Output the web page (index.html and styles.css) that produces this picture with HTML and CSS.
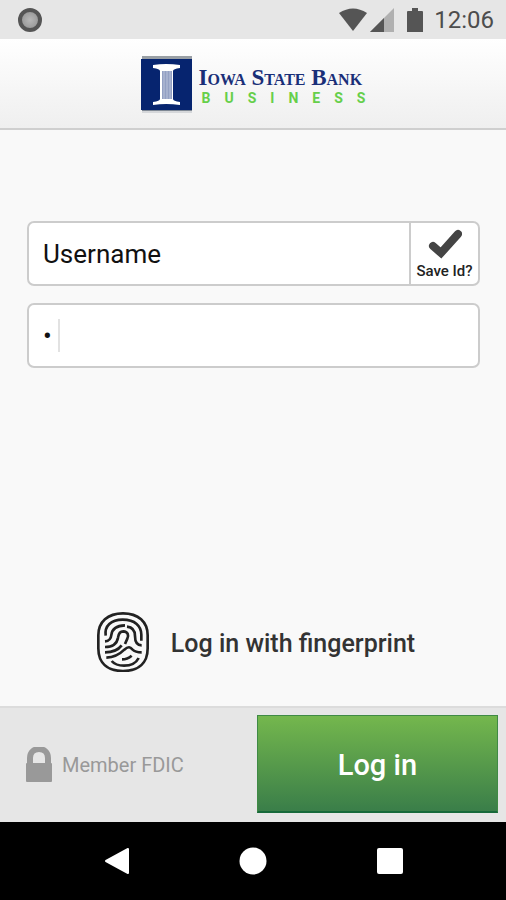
FILE: index.html
```html
<!DOCTYPE html>
<html lang="en">
<head>
  <meta charset="utf-8">
  <meta name="viewport" content="width=device-width, initial-scale=1">
  <title>Iowa State Bank Business</title>
  <link rel="stylesheet" href="styles.css">
</head>
<body>
  <div class="status-bar">
    <span class="status-dot"></span>
    <div class="status-icons">
      <svg class="wifi" width="30" height="24" viewBox="0 0 30 24">
        <path d="M1 5 Q15 -4 29 5 L15 23 Z" fill="#555"/>
      </svg>
      <svg class="signal" width="24" height="24" viewBox="0 0 24 24">
        <path d="M24 0 V24 H0 Z" fill="#b0b0b0"/>
        <path d="M14 10 V24 H0 Z" fill="#555"/>
      </svg>
      <svg class="battery" width="16" height="24" viewBox="0 0 16 24">
        <path d="M5 0 H11 V3 H15 Q16 3 16 4 V24 H0 V4 Q0 3 1 3 H5 Z" fill="#555"/>
      </svg>
      <span class="clock">12:06</span>
    </div>
  </div>

  <header class="header">
    <svg class="logo-mark" width="52" height="58" viewBox="0 0 52 58">
      <rect x="1" y="0" width="50" height="57" fill="#d5d7da"/>
      <rect x="1" y="0" width="50" height="4" fill="#999fa5"/>
      <rect x="1" y="53" width="50" height="2" fill="#7f8894"/>
      <rect x="0" y="3" width="51" height="51" fill="#06246f"/>
      <path d="M12 9 Q25 7 39 9 V12 Q32 13 32 15 V43 Q32 45 39 46 V49 Q25 47 12 49 V46 Q19 45 19 43 V15 Q19 13 12 12 Z" fill="#fff"/>
      <path d="M21 15 H31 V43 H21 Z" fill="#93a0c3"/>
      <path d="M23 15 V43 M26 15 V43 M29 15 V43" stroke="#b9c2da" stroke-width="1"/>
    </svg>
    <div class="logo-text">
      <span class="logo-name">Iowa State Bank</span>
      <span class="logo-sub">BUSINESS</span>
    </div>
  </header>

  <main class="content">
    <form class="login-form" id="loginForm">
      <div class="field">
        <input type="text" class="field-input" id="username" placeholder="Username" aria-label="Username">
        <label class="save-id" for="saveId">
          <input type="checkbox" id="saveId" checked>
          <svg width="34" height="32" viewBox="0 0 34 32">
            <path d="M5 17 L13 24 L30 5" fill="none" stroke="#444" stroke-width="8" stroke-linecap="round"/>
          </svg>
          <span>Save Id?</span>
        </label>
      </div>
      <div class="field">
        <input type="password" class="field-input password" id="password" value="1" aria-label="Password">
      </div>
    </form>

    <button type="button" class="fingerprint">
      <svg width="52" height="60" viewBox="34 36 156 180" fill="none" stroke="#222" stroke-width="8">
        <path d="M112 40 C66 40 38 66 38 106 V145 C38 190 66 213 112 213 C158 213 186 190 186 145 V106 C186 66 158 40 112 40 Z"/>
        <path d="M60 107 C56 78 76 59 111 59 C148 59 167 78 167 104 V122"/>
        <path d="M58 124 C72 123 76 116 77 105 C79 86 91 77 118 76"/>
        <path d="M124 80 C142 82 148 94 148 108 C148 126 153 136 168 136"/>
        <path d="M58 141 C84 141 94 130 97 113 C99 98 106 94 113 94 C127 95 130 106 125 116 L118 132"/>
        <path d="M58 157 C84 157 99 148 108 136"/>
        <path d="M62 173 C90 172 105 160 116 149 C128 138 134 141 140 148 C146 154 156 157 168 157"/>
        <path d="M78 183 C88 195 100 197 115 197 C138 197 151 190 159 174"/>
        <path d="M109 178 C122 178 131 173 138 167"/>
      </svg>
      <span>Log in with fingerprint</span>
    </button>
  </main>

  <footer class="footer">
    <div class="fdic">
      <svg width="28" height="36" viewBox="0 0 28 36">
        <path d="M5 18 V11 C5 -1 23 -1 23 11 V18" fill="none" stroke="#999" stroke-width="6"/>
        <rect x="1" y="16" width="26" height="19" rx="1" fill="#999"/>
      </svg>
      <span>Member FDIC</span>
    </div>
    <button type="submit" form="loginForm" class="login-button">Log in</button>
  </footer>

  <nav class="nav-bar">
    <button type="button" aria-label="Back">
      <svg width="28" height="28" viewBox="0 0 28 28"><path d="M4 14 L26 2 V26 Z" fill="#fff" stroke="#fff" stroke-width="2" stroke-linejoin="round"/></svg>
    </button>
    <button type="button" aria-label="Home">
      <svg width="28" height="28" viewBox="0 0 28 28"><circle cx="14" cy="14" r="13.5" fill="#fff"/></svg>
    </button>
    <button type="button" aria-label="Recent apps">
      <svg width="28" height="28" viewBox="0 0 28 28"><rect x="1" y="1" width="26" height="26" rx="2" fill="#fff"/></svg>
    </button>
  </nav>
</body>
</html>
```
FILE: styles.css
```css
* {
  box-sizing: border-box;
}

body {
  margin: 0;
  min-height: 100vh;
  display: flex;
  flex-direction: column;
  background-color: #f9f9f9;
  font-family: Roboto, sans-serif;
  color: #222;
}

button {
  border: none;
  padding: 0;
  background: none;
  font-family: inherit;
  cursor: pointer;
}

svg {
  display: block;
  flex: none;
}

/* phone status bar */
.status-bar {
  display: flex;
  align-items: center;
  justify-content: space-between;
  height: 39px;
  padding: 1px 12px 0 18px;
  background-color: #e6e6e6;
}

.status-dot {
  width: 24px;
  height: 24px;
  border: 4px solid #555;
  border-radius: 50%;
  background: radial-gradient(#b8b8b8, #909090);
}

.status-icons {
  display: flex;
  align-items: center;
}

.signal {
  margin-left: 2px;
}

.battery {
  margin-left: 13px;
}

.clock {
  margin-left: 11px;
  font-size: 24px;
  line-height: 28px;
  color: #4d4d4d;
}

/* bank header */
.header {
  display: flex;
  justify-content: center;
  gap: 6px;
  height: 91px;
  padding-top: 17px;
  border-bottom: 2px solid #cfcfcf;
  background: linear-gradient(to bottom, #ffffff, #efefef);
}

.logo-text {
  display: flex;
  flex-direction: column;
  padding-top: 9px;
}

.logo-name {
  font-family: "Liberation Serif", serif;
  font-size: 23px;
  line-height: 26px;
  font-variant: small-caps;
  font-weight: bold;
  color: #1a2f78;
}

.logo-sub {
  margin-right: -14px;
  padding-left: 3px;
  font-size: 14px;
  line-height: 14px;
  font-weight: bold;
  letter-spacing: 14px;
  color: #66cf4a;
}

/* login form */
.content {
  flex: 1;
  display: flex;
  flex-direction: column;
  justify-content: space-between;
  padding: 91px 26px 34px 27px;
}

.login-form {
  display: flex;
  flex-direction: column;
  gap: 17px;
}

.field {
  display: flex;
  height: 65px;
  border: 2px solid #cccccc;
  border-radius: 7px;
  background-color: #fff;
  overflow: hidden;
}

.field-input {
  flex: 1;
  min-width: 0;
  border: none;
  outline: none;
  padding: 0 14px;
  background: none;
  font-family: inherit;
  font-size: 26px;
  color: #111;
}

.field-input::placeholder {
  color: #111;
  opacity: 1;
}

.password {
  background: linear-gradient(#e2e2e2, #e2e2e2) 29px center / 2px 33px no-repeat;
}

.save-id {
  position: relative;
  display: flex;
  flex-direction: column;
  align-items: center;
  width: 69px;
  padding-top: 6px;
  border-left: 2px solid #cccccc;
  font-size: 15px;
  line-height: 20px;
  font-weight: 500;
  cursor: pointer;
}

/* the svg tick stands in for the native box */
.save-id input {
  position: absolute;
  inset: 0;
  width: 100%;
  height: 100%;
  margin: 0;
  opacity: 0;
}

.save-id input:not(:checked) + svg {
  opacity: 0.3;
}

.fingerprint {
  display: flex;
  align-items: center;
  align-self: center;
  gap: 22px;
  margin-left: 5px;
  font-size: 25px;
  line-height: 30px;
  font-weight: 500;
  color: #333;
}

.fingerprint span {
  padding-top: 3px;
}

/* bottom bar */
.footer {
  display: flex;
  align-items: center;
  height: 116px;
  padding: 0 8px 0 25px;
  border-top: 2px solid #dcdcdc;
  background-color: #e6e6e6;
}

.fdic {
  flex: 1;
  display: flex;
  align-items: center;
  gap: 9px;
  font-size: 20px;
  line-height: 24px;
  color: #999;
}

.login-button {
  width: 51%;
  height: 98px;
  margin-bottom: 2px;
  padding-top: 3px;
  border: 1px solid #3f8a45;
  border-bottom: 2px solid #17693a;
  background: linear-gradient(to bottom, #74b74d, #3a7e49);
  font-size: 29px;
  font-weight: 500;
  color: #fff;
}

/* phone navigation bar */
.nav-bar {
  display: flex;
  justify-content: center;
  align-items: center;
  gap: 109px;
  height: 78px;
  background-color: #000;
}
```
